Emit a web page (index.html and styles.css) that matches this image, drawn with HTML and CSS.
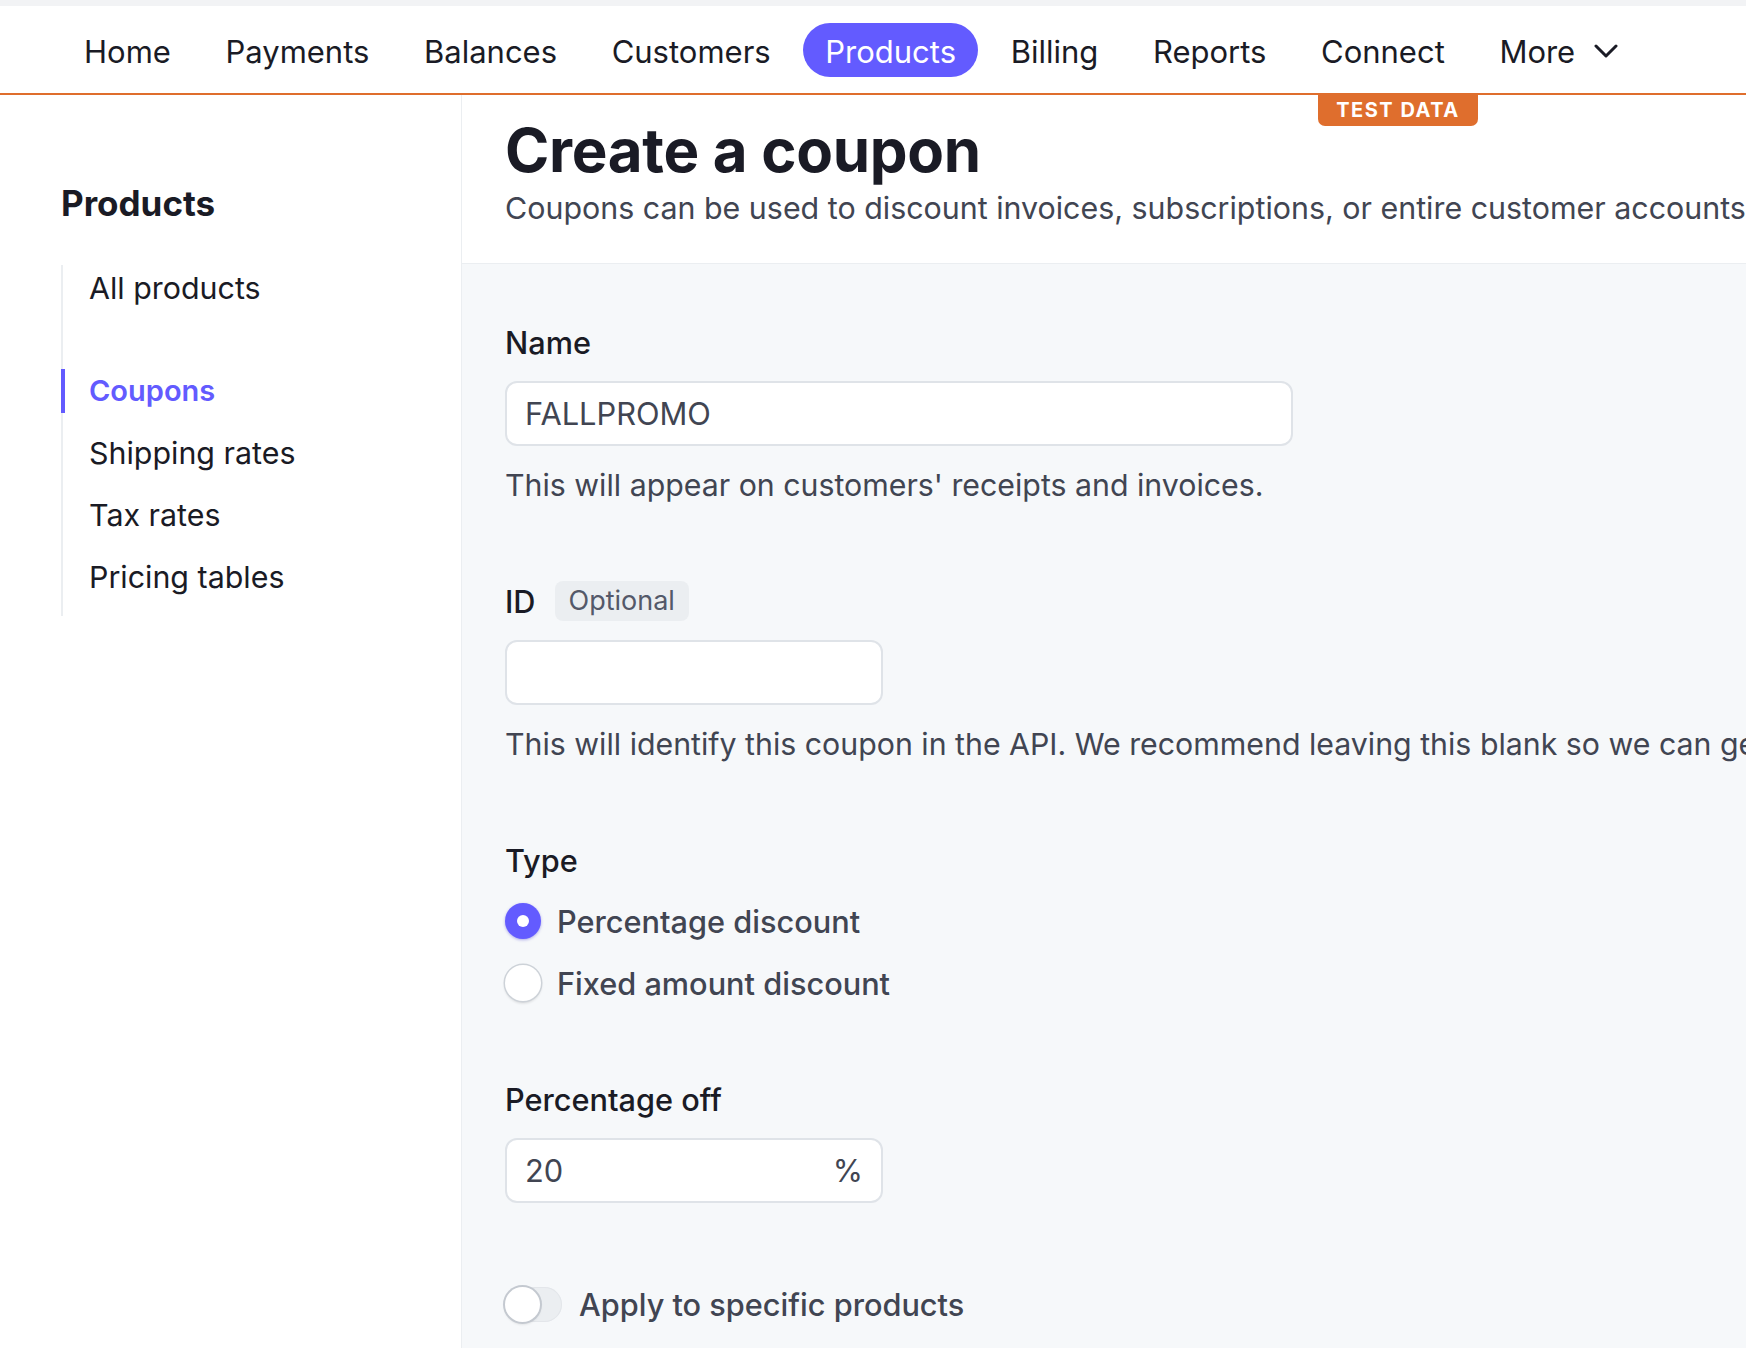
FILE: index.html
```html
<!DOCTYPE html>
<html lang="en">
<head>
    <meta charset="UTF-8">
    <meta name="viewport" content="width=device-width, initial-scale=1.0">
    <title>Create a coupon</title>
    <link rel="stylesheet" href="styles.css">
</head>
<body>

    <div class="top-strip"></div>

    <nav class="topnav">
        <a class="nav-item">Home</a>
        <a class="nav-item">Payments</a>
        <a class="nav-item">Balances</a>
        <a class="nav-item">Customers</a>
        <a class="nav-item active">Products</a>
        <a class="nav-item">Billing</a>
        <a class="nav-item">Reports</a>
        <a class="nav-item">Connect</a>
        <a class="nav-item more">More
            <svg class="chevron" width="24" height="14" viewBox="0 0 24 14">
                <path d="M2 2 L12 12 L22 2" fill="none" stroke="#1a1b25" stroke-width="3" stroke-linecap="round" stroke-linejoin="round"/>
            </svg>
        </a>
        <span class="test-badge">TEST DATA</span>
    </nav>

    <div class="layout">
        <aside class="sidebar">
            <h3 class="side-title">Products</h3>
            <ul class="side-list">
                <li class="side-item first">All products</li>
                <li class="side-item current">Coupons</li>
                <li class="side-item">Shipping rates</li>
                <li class="side-item">Tax rates</li>
                <li class="side-item">Pricing tables</li>
            </ul>
        </aside>

        <main class="main">
            <header class="page-head">
                <h1>Create a coupon</h1>
                <p class="subtitle">Coupons can be used to discount invoices, subscriptions, or entire customer accounts.</p>
            </header>

            <form class="coupon-form">
                <div class="field">
                    <label class="field-label">Name</label>
                    <div class="input wide">FALLPROMO</div>
                    <p class="help">This will appear on customers' receipts and invoices.</p>
                </div>

                <div class="field">
                    <label class="field-label">ID <span class="optional">Optional</span></label>
                    <div class="input narrow"></div>
                    <p class="help">This will identify this coupon in the API. We recommend leaving this blank so we can generate an ID for you.</p>
                </div>

                <div class="field type-field">
                    <label class="field-label">Type</label>
                    <div class="radio-row">
                        <span class="radio checked"></span>
                        <span class="radio-label">Percentage discount</span>
                    </div>
                    <div class="radio-row">
                        <span class="radio"></span>
                        <span class="radio-label">Fixed amount discount</span>
                    </div>
                </div>

                <div class="field percent-field">
                    <label class="field-label">Percentage off</label>
                    <div class="input narrow suffix-input">
                        <span>20</span>
                        <span>%</span>
                    </div>
                </div>

                <div class="toggle-row">
                    <span class="toggle"><span class="knob"></span></span>
                    <span class="toggle-label">Apply to specific products</span>
                </div>
            </form>
        </main>
    </div>

</body>
</html>
```

FILE: styles.css
```css
* {
    box-sizing: border-box;
}
body {
    margin: 0;
    width: 1746px;
    height: 1348px;
    overflow: hidden;
    font-family: Inter, "Noto Sans", sans-serif;
    color: #1a1b25;
    background: #f6f8fa;
}
.top-strip {
    height: 6px;
    background: #f2f3f5;
}

/* top navigation */
.topnav {
    position: relative;
    display: flex;
    align-items: center;
    gap: 10.6px;
    height: 89px;
    padding-left: 62px;
    background: white;
    border-bottom: 2px solid #df6e2d;
}
.nav-item {
    display: flex;
    align-items: center;
    height: 54px;
    padding: 4px 22px 0 22px;
    border-radius: 27px;
    font-size: 31px;
    color: #1a1b25;
}
.nav-item.active {
    background: #635bff;
    color: white;
}
.nav-item.more .chevron {
    margin-left: 19px;
    margin-top: -2px;
}
.test-badge {
    position: absolute;
    left: 1318px;
    top: 87px;
    width: 160px;
    height: 33px;
    padding-top: 1px;
    background: #df6e2d;
    color: white;
    font-size: 20px;
    font-weight: 700;
    letter-spacing: 1.5px;
    text-align: center;
    line-height: 32px;
    border-radius: 0 0 7px 7px;
}

.layout {
    display: flex;
    height: 1253px;
}

/* sidebar */
.sidebar {
    width: 462px;
    flex-shrink: 0;
    background: white;
    border-right: 1px solid #ebeef1;
    padding-left: 61px;
    padding-top: 88px;
}
.side-title {
    margin: 0 0 42px 0;
    font-size: 35px;
    line-height: 40px;
    font-weight: 700;
}
.side-list {
    list-style: none;
    margin: 0;
    padding: 1px 0 17px 0;
    border-left: 2px solid #ebeef1;
    display: flex;
    flex-direction: column;
    gap: 18px;
}
.side-item {
    position: relative;
    height: 44px;
    line-height: 44px;
    padding-left: 26px;
    font-size: 30.4px;
    color: #1a1b25;
}
.side-item.first {
    margin-bottom: 41px;
}
.side-item.current {
    color: #635bff;
    font-size: 29px;
    font-weight: 600;
}
.side-item.current::before {
    content: "";
    position: absolute;
    left: -2px;
    top: 0;
    width: 4px;
    height: 44px;
    background: #635bff;
}

/* main */
.main {
    flex: 1;
    overflow: hidden;
}
.page-head {
    background: white;
    border-bottom: 1px solid #ebeef1;
    padding: 19px 0 0 43px;
    height: 169px;
    white-space: nowrap;
}
.page-head h1 {
    margin: 0;
    font-size: 60px;
    line-height: 72px;
    font-weight: 700;
    letter-spacing: -0.3px;
}
.subtitle {
    margin: 2px 0 0 0;
    font-size: 30.4px;
    line-height: 40px;
    color: #414552;
}

.coupon-form {
    padding: 58px 0 0 43px;
    white-space: nowrap;
}
.field {
    margin-bottom: 76px;
}
.field.type-field {
    margin-bottom: 74px;
}
.field.percent-field {
    margin-bottom: 83px;
}
.field-label {
    display: flex;
    align-items: center;
    height: 40px;
    font-size: 30.7px;
    font-weight: 500;
    color: #1a1b25;
    margin-bottom: 19px;
}
.optional {
    margin-left: 19px;
    padding: 0 14px;
    height: 40px;
    line-height: 40px;
    border-radius: 8px;
    background: #ebeef1;
    color: #545969;
    font-size: 27px;
    font-weight: 400;
}
.input {
    height: 65px;
    background: white;
    border: 2px solid #dfe3e8;
    border-radius: 12px;
    padding: 0 18px;
    font-size: 30.8px;
    color: #414552;
    display: flex;
    align-items: center;
}
.input.wide {
    width: 788px;
}
.input.narrow {
    width: 378px;
}
.suffix-input {
    justify-content: space-between;
}
.help {
    margin: 19px 0 0 0;
    font-size: 30.3px;
    line-height: 40px;
    color: #414552;
}

.radio-row {
    display: flex;
    align-items: center;
    gap: 16px;
    height: 44px;
    margin-bottom: 18px;
}
.radio {
    width: 36px;
    height: 36px;
    border-radius: 50%;
    background: white;
    box-shadow: 0 0 0 1.5px #cdd2d8, 0 2px 3px rgba(0, 0, 0, 0.16);
}
.radio.checked {
    background: #635bff;
    box-shadow: 0 1px 3px rgba(64, 56, 210, 0.4);
    display: flex;
    align-items: center;
    justify-content: center;
}
.radio.checked::after {
    content: "";
    width: 12px;
    height: 12px;
    border-radius: 50%;
    background: white;
}
.radio-label,
.toggle-label {
    font-size: 30.7px;
    font-weight: 500;
    color: #414552;
}

.toggle-row {
    display: flex;
    align-items: center;
    gap: 17px;
}
.toggle {
    width: 57px;
    height: 35px;
    border-radius: 18px;
    background: #ebeef1;
    box-shadow: inset 0 0 0 1px #e3e6ea;
    position: relative;
}
.knob {
    position: absolute;
    left: 0;
    top: 0;
    width: 35px;
    height: 35px;
    border-radius: 50%;
    background: white;
    box-shadow: 0 0 0 2px #c4c9d0, 0 2px 3px rgba(0, 0, 0, 0.15);
}
```
